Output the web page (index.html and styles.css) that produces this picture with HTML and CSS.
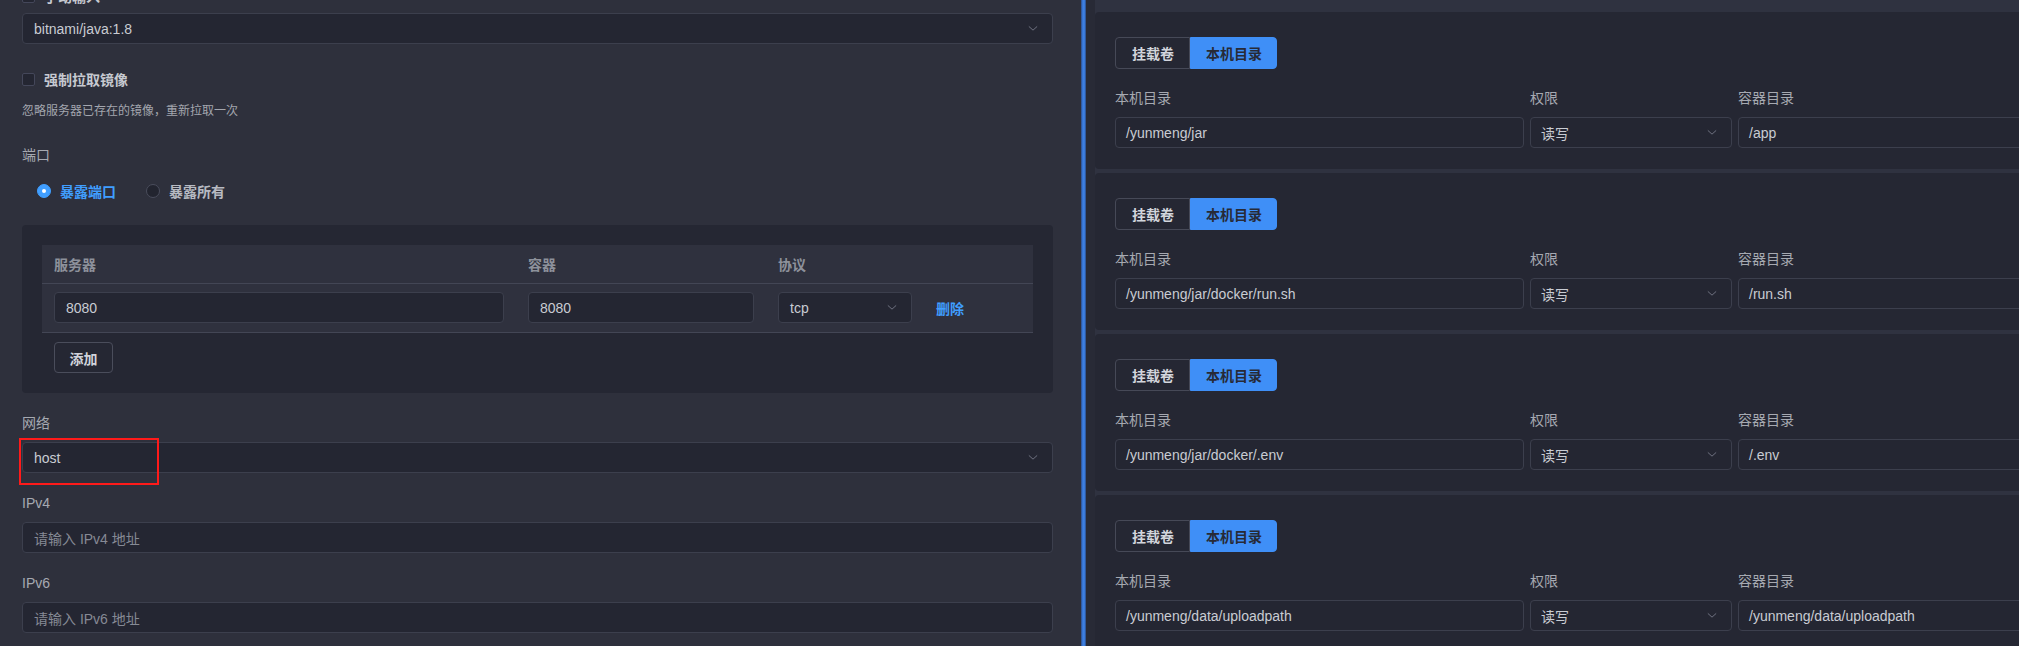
FILE: index.html
```html
<!DOCTYPE html>
<html lang="zh-CN">
<head>
<meta charset="utf-8">
<title>容器配置</title>
<link rel="stylesheet" href="styles.css">
</head>
<body>
<div class="app">
  <div class="left-pane">
    <div class="form">
      <label class="check-row">
        <span class="checkbox"></span>
        <span class="check-text">手动输入</span>
      </label>
      <div class="field select mt6">
        <span class="value">bitnami/java:1.8</span>
        <svg class="chev" viewBox="0 0 12 8"><path d="M1 1.5 L6 6 L11 1.5"/></svg>
      </div>

      <label class="check-row mt24">
        <span class="checkbox"></span>
        <span class="check-text">强制拉取镜像</span>
      </label>
      <div class="help">忽略服务器已存在的镜像，重新拉取一次</div>

      <div class="label mt23">端口</div>
      <div class="radio-row">
        <span class="radio on"></span><span class="radio-text on">暴露端口</span>
        <span class="radio"></span><span class="radio-text">暴露所有</span>
      </div>

      <div class="port-box">
        <div class="ptable">
          <div class="prow phead">
            <div class="pc c1">服务器</div>
            <div class="pc c2">容器</div>
            <div class="pc c3">协议</div>
            <div class="pc c4"></div>
          </div>
          <div class="prow pbody">
            <div class="pc c1"><div class="field"><span class="value">8080</span></div></div>
            <div class="pc c2"><div class="field"><span class="value">8080</span></div></div>
            <div class="pc c3"><div class="field select"><span class="value">tcp</span><svg class="chev" viewBox="0 0 12 8"><path d="M1 1.5 L6 6 L11 1.5"/></svg></div></div>
            <div class="pc c4"><span class="link">删除</span></div>
          </div>
        </div>
        <button class="btn">添加</button>
      </div>

      <div class="label mt19">网络</div>
      <div class="field select mt8 annotated">
        <span class="value">host</span>
        <svg class="chev" viewBox="0 0 12 8"><path d="M1 1.5 L6 6 L11 1.5"/></svg>
        <span class="red-mark"></span>
      </div>

      <div class="label mt19">IPv4</div>
      <div class="field mt8"><span class="ph">请输入 IPv4 地址</span></div>

      <div class="label mt19">IPv6</div>
      <div class="field mt8"><span class="ph">请输入 IPv6 地址</span></div>
    </div>
  </div>

  <div class="splitter"></div>

  <div class="right-pane">
    <div class="mount-list">
      <div class="card">
        <div class="seg"><span class="seg-btn">挂载卷</span><span class="seg-btn active">本机目录</span></div>
        <div class="mgrid">
          <div class="label">本机目录</div><div class="label">权限</div><div class="label">容器目录</div>
          <div class="field"><span class="value">/yunmeng/jar</span></div>
          <div class="field select"><span class="value">读写</span><svg class="chev" viewBox="0 0 12 8"><path d="M1 1.5 L6 6 L11 1.5"/></svg></div>
          <div class="field"><span class="value">/app</span></div>
        </div>
      </div>
      <div class="card">
        <div class="seg"><span class="seg-btn">挂载卷</span><span class="seg-btn active">本机目录</span></div>
        <div class="mgrid">
          <div class="label">本机目录</div><div class="label">权限</div><div class="label">容器目录</div>
          <div class="field"><span class="value">/yunmeng/jar/docker/run.sh</span></div>
          <div class="field select"><span class="value">读写</span><svg class="chev" viewBox="0 0 12 8"><path d="M1 1.5 L6 6 L11 1.5"/></svg></div>
          <div class="field"><span class="value">/run.sh</span></div>
        </div>
      </div>
      <div class="card">
        <div class="seg"><span class="seg-btn">挂载卷</span><span class="seg-btn active">本机目录</span></div>
        <div class="mgrid">
          <div class="label">本机目录</div><div class="label">权限</div><div class="label">容器目录</div>
          <div class="field"><span class="value">/yunmeng/jar/docker/.env</span></div>
          <div class="field select"><span class="value">读写</span><svg class="chev" viewBox="0 0 12 8"><path d="M1 1.5 L6 6 L11 1.5"/></svg></div>
          <div class="field"><span class="value">/.env</span></div>
        </div>
      </div>
      <div class="card">
        <div class="seg"><span class="seg-btn">挂载卷</span><span class="seg-btn active">本机目录</span></div>
        <div class="mgrid">
          <div class="label">本机目录</div><div class="label">权限</div><div class="label">容器目录</div>
          <div class="field"><span class="value">/yunmeng/data/uploadpath</span></div>
          <div class="field select"><span class="value">读写</span><svg class="chev" viewBox="0 0 12 8"><path d="M1 1.5 L6 6 L11 1.5"/></svg></div>
          <div class="field"><span class="value">/yunmeng/data/uploadpath</span></div>
        </div>
      </div>
    </div>
  </div>
</div>
</body>
</html>
```
FILE: styles.css
```css
* { box-sizing: border-box; }
html, body {
  margin: 0;
  padding: 0;
  width: 2019px;
  height: 646px;
  overflow: hidden;
  background: #2e303c;
  font-family: "Liberation Sans", "Noto Sans CJK SC", sans-serif;
  font-size: 14px;
  color: #c9ccd3;
}
.app {
  display: flex;
  width: 2019px;
  height: 646px;
}
.left-pane {
  width: 1081px;
  flex: none;
  height: 646px;
  overflow: hidden;
  background: #2e303c;
  padding: 0 28px 0 22px;
}
.form {
  margin-top: -15px;
  display: flex;
  flex-direction: column;
}
.mt6 { margin-top: 6px; }
.mt8 { margin-top: 8px; }
.mt19 { margin-top: 19px; }
.mt23 { margin-top: 23px; }
.mt24 { margin-top: 24px; }

.check-row {
  display: flex;
  align-items: center;
  height: 22px;
  gap: 9px;
}
.checkbox {
  width: 13px;
  height: 13px;
  border: 1px solid #44475a;
  border-radius: 2px;
  background: #242632;
  flex: none;
}
.check-text {
  font-weight: bold;
  color: #c6c9d0;
}
.help {
  margin-top: 11px;
  font-size: 12px;
  line-height: 20px;
  color: #a3a6ae;
}
.label {
  line-height: 22px;
  height: 22px;
  color: #a6a9b1;
}
.field {
  position: relative;
  height: 31px;
  border: 1px solid #3c3f4d;
  border-radius: 4px;
  background: #242632;
  display: flex;
  align-items: center;
  padding: 0 11px;
}
.value { color: #c9ccd3; white-space: nowrap; }
.ph { color: #868a95; white-space: nowrap; }
.select { justify-content: space-between; padding-right: 14px; }
.chev {
  width: 10px;
  height: 7px;
  fill: none;
  stroke: #6f7280;
  stroke-width: 1.2;
}

.radio-row {
  margin-top: 8px;
  height: 34px;
  display: flex;
  align-items: center;
  padding-left: 15px;
}
.radio {
  width: 14px;
  height: 14px;
  border-radius: 50%;
  background: #22242f;
  border: 1px solid #4a4d5c;
  flex: none;
  margin-right: 9px;
}
.radio.on {
  background: #409eff;
  border-color: #409eff;
  position: relative;
}
.radio.on::after {
  content: "";
  position: absolute;
  left: 4px;
  top: 4px;
  width: 4px;
  height: 4px;
  border-radius: 50%;
  background: #fff;
}
.radio-text {
  font-weight: bold;
  color: #b7bac2;
  margin-right: 30px;
}
.radio-text.on { color: #409eff; }

.port-box {
  margin-top: 17px;
  background: #252733;
  border-radius: 4px;
  padding: 20px 20px 20px 20px;
}
.ptable {
  display: flex;
  flex-direction: column;
}
.prow {
  display: flex;
  background: #2f313e;
  border-bottom: 1px solid #434655;
}
.phead { height: 39px; align-items: center; }
.pbody { height: 49px; padding: 8px 0 9px; align-items: center; }
.pc { padding: 0 12px; flex: none; }
.phead .pc { font-weight: bold; color: #8d919b; }
.c1 { width: 474px; }
.c2 { width: 250px; }
.c3 { width: 158px; }
.c4 { flex: 1; }
.link { color: #409eff; font-weight: bold; }
.btn {
  margin: 9px 0 0 12px;
  height: 31px;
  width: 59px;
  border: 1px solid #4a4d5b;
  border-radius: 4px;
  background: transparent;
  color: #d0d3da;
  font-family: inherit;
  font-size: 14px;
  font-weight: bold;
  padding: 0;
}
.annotated { overflow: visible; }
.red-mark {
  position: absolute;
  left: -4px;
  top: -5px;
  width: 140px;
  height: 47px;
  border: 2px solid #ff1a1a;
  pointer-events: none;
}

.splitter {
  width: 5px;
  flex: none;
  background: linear-gradient(to right, #2a4d8c, #3f82e6 40%, #3a7ad9 70%, #2a4a82);
}
.right-pane {
  flex: 1;
  background: #282a36;
  padding-left: 9px;
  overflow: hidden;
}
.mount-list {
  background: #2f3240;
  padding-top: 12px;
  display: flex;
  flex-direction: column;
  gap: 4px;
  height: 100%;
}
.card {
  width: 1072px;
  height: 157px;
  flex: none;
  background: #252733;
  border-radius: 4px;
  padding: 25px 20px 21px;
}
.seg {
  display: flex;
  height: 32px;
}
.seg-btn {
  display: flex;
  align-items: center;
  padding: 0 15px 0 16px;
  font-weight: bold;
  color: #d2d5dc;
  border: 1px solid #464957;
  border-radius: 4px 0 0 4px;
}
.seg-btn.active {
  background: #3f8ff7;
  border-color: #3f8ff7;
  color: #272a36;
  border-radius: 0 4px 4px 0;
  padding: 0 14px 0 15px;
}
.mgrid {
  margin-top: 18px;
  display: grid;
  grid-template-columns: 409px 202px 409px;
  column-gap: 6px;
  row-gap: 8px;
}
.mgrid .field { padding-left: 10px; }
```
